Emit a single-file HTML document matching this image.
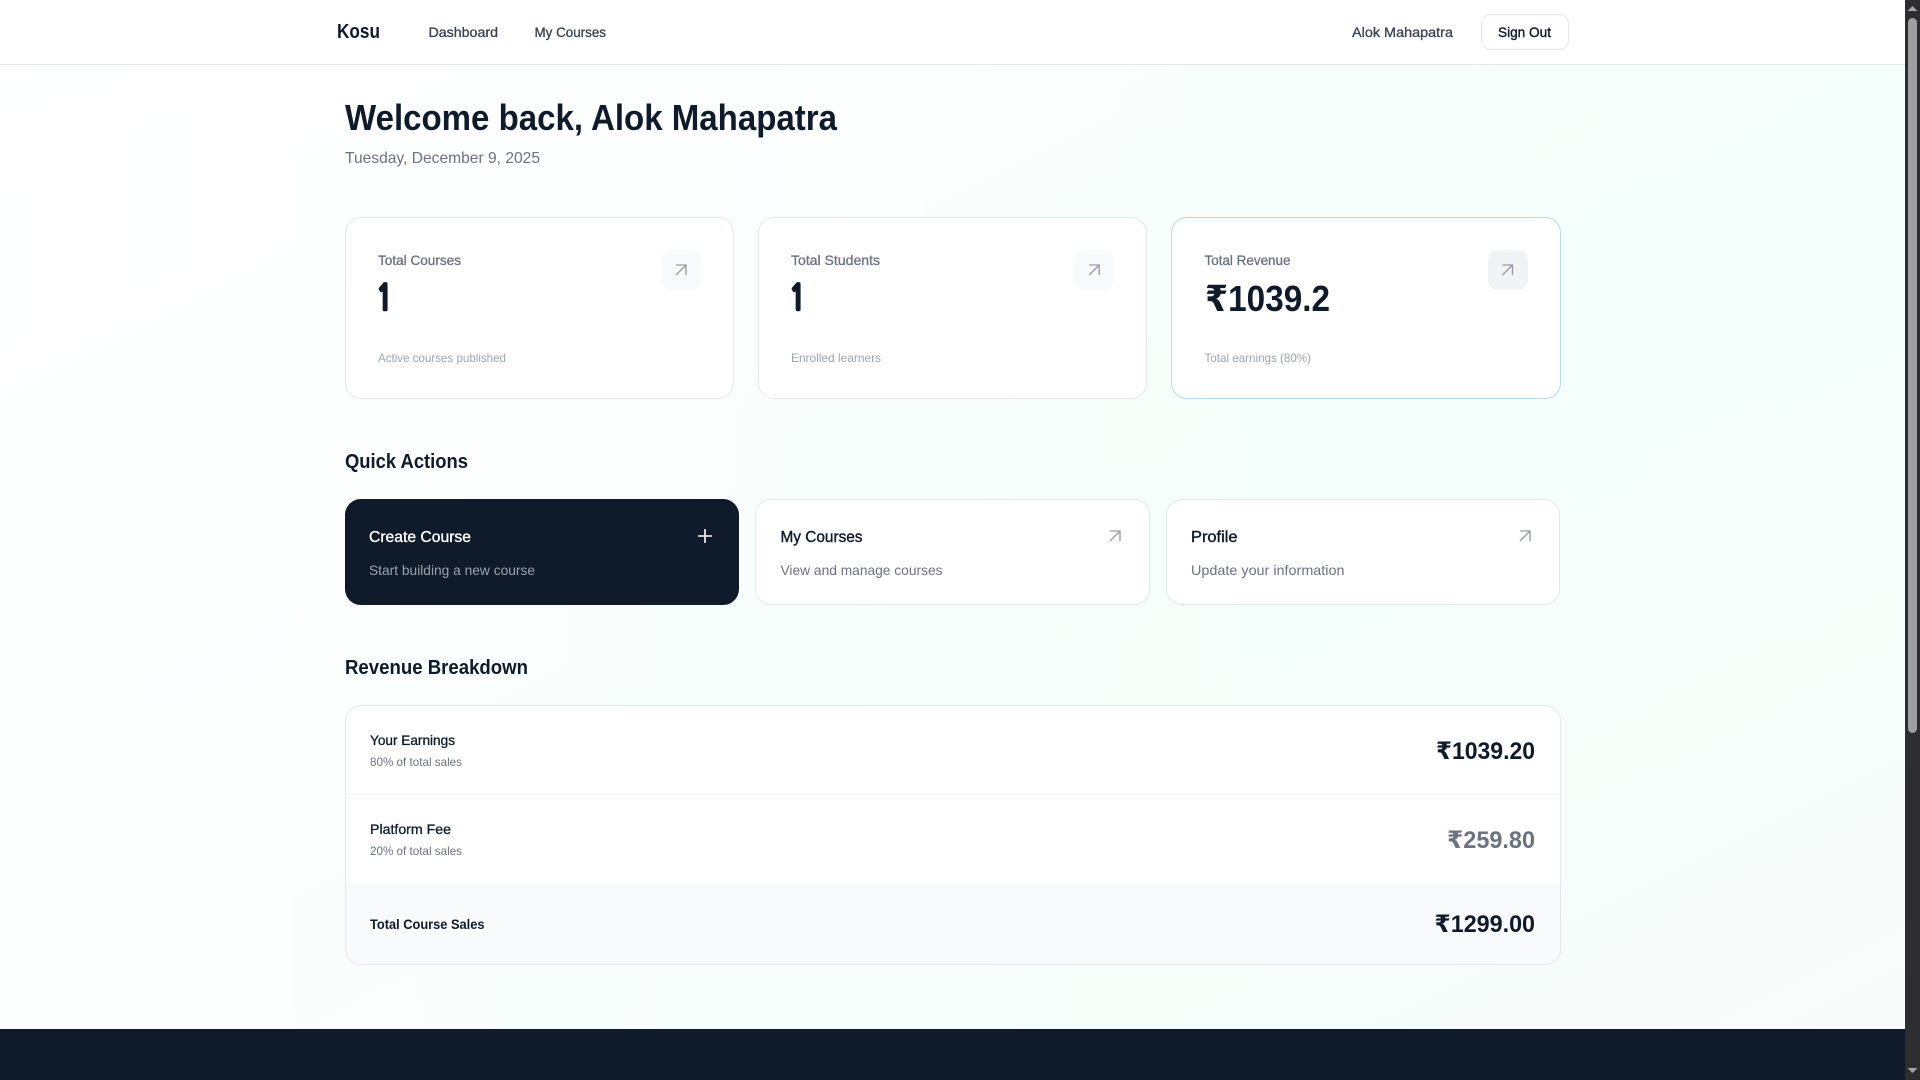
<!DOCTYPE html>
<html lang="en">
<head>
<meta charset="utf-8">
<title>Kosu Dashboard</title>
<style>
*{box-sizing:border-box;margin:0;padding:0}
html,body{width:1920px;height:1080px;overflow:hidden;background:#fff}
body{position:relative;font-family:"Liberation Sans",sans-serif}
.b{position:absolute}
#bg{left:0;top:65px;width:1905px;height:964px;background:linear-gradient(to right,rgba(255,255,255,.62) 0%,rgba(255,255,255,.35) 35%,rgba(255,255,255,0) 70%),linear-gradient(to bottom right,#ffffff 0%,#f4fefa 52%,#f5fefa 74%,#f8fbfa 100%)}
#nav{left:0;top:0;width:1905px;height:65px;background:#fff;border-bottom:1px solid #e5e7eb}
#signout{left:1481px;top:14px;width:88px;height:36px;border:1px solid #e5e7eb;border-radius:10px;background:#fff}
.card{background:#fff;border:1px solid #e5e7eb;border-radius:16px}
.stat{top:217px;height:182px;width:389.33px}
.rev{border-color:#bcd8ee;width:390px}
.ico{top:250px;width:40px;height:40px;border-radius:10px;background:#f9fafb}
.act{top:499px;height:106px;width:394.67px}
.dark{background:#0f1a2a;border-color:#0f1a2a}
#panel{left:344.5px;top:705px;width:1216px;height:260px;overflow:hidden}
#r1{left:0;top:88px;width:100%;height:1px;background:#f3f4f6}
#r3{left:0;top:177px;width:100%;height:83px;background:#f9fafb}
#footer{left:0;top:1029px;width:1905px;height:51px;background:#0f1a2a}
#sb{left:1905px;top:0;width:15px;height:1080px;background:#2c2c31}
#thumb{left:1908px;top:18px;width:9px;height:715px;background:#9f9f9f;border-radius:5px}
svg{position:absolute;left:0;top:0}
text{font-family:"Liberation Sans","DejaVu Sans",sans-serif;white-space:pre}
.m{stroke:currentColor;stroke-width:.3px}
.ink{fill:#0f1a2a;color:#0f1a2a}
.nv{fill:#374151;color:#374151}
.g5{fill:#6b7280;color:#6b7280}
.g4{fill:#9ca3af;color:#9ca3af}
.ar{fill:none;stroke:#969ba4;stroke-width:1.35}
.one{font-family:"NanumGothic","IPAGothic","Liberation Sans",sans-serif;stroke:#0f1a2a;stroke-width:2.4px;stroke-linejoin:miter}
</style>
</head>
<body>
<div class="b" id="bg"></div>
<div class="b" id="nav"></div>
<div class="b" id="signout"></div>

<div class="b card stat" style="left:344.5px"></div>
<div class="b card stat" style="left:757.83px"></div>
<div class="b card stat rev" style="left:1171.17px"></div>
<div class="b ico" style="left:660.8px"></div>
<div class="b ico" style="left:1074.2px"></div>
<div class="b ico" style="left:1487.5px;background:#f1f3f5"></div>

<div class="b card act dark" style="left:344.5px"></div>
<div class="b card act" style="left:755.17px"></div>
<div class="b card act" style="left:1165.83px"></div>

<div class="b card" id="panel">
  <div class="b" id="r1"></div>
  <div class="b" id="r3"></div>
</div>

<div class="b" id="footer"></div>
<div class="b" id="sb"></div>
<div class="b" id="thumb"></div>

<svg width="1920" height="1080" viewBox="0 0 1920 1080" xmlns="http://www.w3.org/2000/svg">
  <!-- nav -->
  <text class="ink" x="337" y="38" font-size="20" font-weight="700" textLength="43" lengthAdjust="spacingAndGlyphs">Kosu</text>
  <text class="nv m" x="428.5" y="37" font-size="14" textLength="69.5" lengthAdjust="spacingAndGlyphs">Dashboard</text>
  <text class="nv m" x="534.5" y="37" font-size="14" textLength="71.5" lengthAdjust="spacingAndGlyphs">My Courses</text>
  <text class="nv m" x="1352" y="37" font-size="14" textLength="101" lengthAdjust="spacingAndGlyphs">Alok Mahapatra</text>
  <text class="ink m" style="stroke-width:.4px" x="1498" y="37" font-size="14" textLength="53" lengthAdjust="spacingAndGlyphs">Sign Out</text>

  <!-- heading -->
  <text class="ink" x="345" y="130" font-size="36" font-weight="700" textLength="492" lengthAdjust="spacingAndGlyphs">Welcome back, Alok Mahapatra</text>
  <text class="g5" x="345" y="163" font-size="16" textLength="195" lengthAdjust="spacingAndGlyphs">Tuesday, December 9, 2025</text>

  <!-- stats -->
  <text class="g5 m" x="378" y="265" font-size="14" textLength="83" lengthAdjust="spacingAndGlyphs">Total Courses</text>
  <text class="ink one" x="376" y="310" font-size="35" font-weight="700" textLength="17" lengthAdjust="spacingAndGlyphs">1</text>
  <text class="g4" x="378" y="362" font-size="12" textLength="128" lengthAdjust="spacingAndGlyphs">Active courses published</text>

  <text class="g5 m" x="791" y="265" font-size="14" textLength="89" lengthAdjust="spacingAndGlyphs">Total Students</text>
  <text class="ink one" x="789" y="310" font-size="35" font-weight="700" textLength="17" lengthAdjust="spacingAndGlyphs">1</text>
  <text class="g4" x="791" y="362" font-size="12" textLength="90" lengthAdjust="spacingAndGlyphs">Enrolled learners</text>

  <text class="g5 m" x="1204.5" y="265" font-size="14" textLength="86" lengthAdjust="spacingAndGlyphs">Total Revenue</text>
  <text class="ink" x="1205" y="311" font-size="36" font-weight="700" textLength="125" lengthAdjust="spacingAndGlyphs">₹1039.2</text>
  <text class="g4" x="1204.5" y="362" font-size="12" textLength="106.5" lengthAdjust="spacingAndGlyphs">Total earnings (80%)</text>

  <path class="ar" d="M676 275 686 265M676 265h10v10"/>
  <path class="ar" d="M1089.2 275 1099.2 265M1089.2 265h10v10"/>
  <path class="ar" d="M1502.5 275 1512.5 265M1502.5 265h10v10"/>

  <!-- quick actions -->
  <text class="ink" x="345" y="468" font-size="20" font-weight="700" textLength="123" lengthAdjust="spacingAndGlyphs">Quick Actions</text>

  <text fill="#ffffff" stroke="#ffffff" stroke-width=".35" x="369" y="542" font-size="16" textLength="102" lengthAdjust="spacingAndGlyphs">Create Course</text>
  <text class="g4" x="369" y="575" font-size="14" textLength="166" lengthAdjust="spacingAndGlyphs">Start building a new course</text>
  <path d="M698 536h14M705 529v14" fill="none" stroke="#fff" stroke-width="1.6"/>

  <text class="ink m" style="stroke-width:.4px" x="780.5" y="542" font-size="16" textLength="82" lengthAdjust="spacingAndGlyphs">My Courses</text>
  <text class="g5" x="780.5" y="575" font-size="14" textLength="162" lengthAdjust="spacingAndGlyphs">View and manage courses</text>
  <path class="ar" d="M1110 541 1120 531M1110 531h10v10"/>

  <text class="ink m" style="stroke-width:.4px" x="1191" y="542" font-size="16" textLength="46.5" lengthAdjust="spacingAndGlyphs">Profile</text>
  <text class="g5" x="1191" y="575" font-size="14" textLength="153.5" lengthAdjust="spacingAndGlyphs">Update your information</text>
  <path class="ar" d="M1520 541 1530 531M1520 531h10v10"/>

  <!-- revenue -->
  <text class="ink" x="345" y="674" font-size="20" font-weight="700" textLength="183" lengthAdjust="spacingAndGlyphs">Revenue Breakdown</text>

  <text class="ink m" x="370" y="745" font-size="14" textLength="85" lengthAdjust="spacingAndGlyphs">Your Earnings</text>
  <text class="g5" x="370" y="766" font-size="12" textLength="92" lengthAdjust="spacingAndGlyphs">80% of total sales</text>
  <text class="ink" x="1436" y="759" font-size="24" font-weight="700" textLength="99" lengthAdjust="spacingAndGlyphs">₹1039.20</text>

  <text class="ink m" x="370" y="834" font-size="14" textLength="81" lengthAdjust="spacingAndGlyphs">Platform Fee</text>
  <text class="g5" x="370" y="855" font-size="12" textLength="92" lengthAdjust="spacingAndGlyphs">20% of total sales</text>
  <text class="g5" x="1447" y="848" font-size="24" font-weight="700" textLength="88" lengthAdjust="spacingAndGlyphs">₹259.80</text>

  <text class="ink" x="370" y="929" font-size="14" font-weight="700" textLength="114.5" lengthAdjust="spacingAndGlyphs">Total Course Sales</text>
  <text class="ink" x="1434.5" y="932" font-size="24" font-weight="700" textLength="100.5" lengthAdjust="spacingAndGlyphs">₹1299.00</text>

  <!-- scrollbar arrows -->
  <path d="M1912.5 6 1917.5 11H1907.5Z" fill="#a6a6a6"/>
  <path d="M1912.5 1073 1917.5 1068H1907.5Z" fill="#a6a6a6"/>
</svg>
</body>
</html>
